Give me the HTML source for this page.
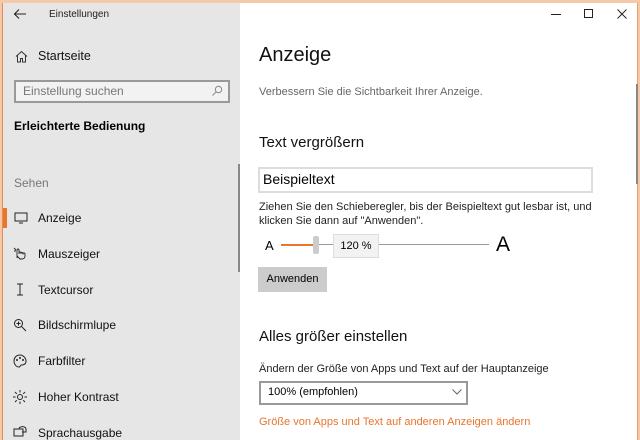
<!DOCTYPE html>
<html><head><meta charset="utf-8"><style>
*{margin:0;padding:0;box-sizing:border-box}
body{width:640px;height:440px;overflow:hidden;position:relative;background:#f5c9a8;font-family:"Liberation Sans",sans-serif;color:#000}
.a{position:absolute;white-space:nowrap}
#win{position:absolute;left:2px;top:3px;width:636px;height:437px;background:#fff;border-left:1px solid #e88a50;border-right:1px solid #e8a070}
#side{position:absolute;left:3px;top:3px;width:237px;height:437px;background:#e6e6e6}
.it{font-size:12px;color:#111}
svg{position:absolute}
</style></head><body>
<div id="win"></div>
<div id="side"></div>
<!-- title -->
<svg style="left:13px;top:8px" width="14" height="12" viewBox="0 0 14 12"><path d="M13 6H2M6 1.5L1.5 6 6 10.5" stroke="#222" fill="none" stroke-width="1.1"/></svg>
<div class="a" style="left:49px;top:9px;font-size:10px;color:#222">Einstellungen</div>
<svg style="left:15px;top:50px" width="13" height="13" viewBox="0 0 13 13"><path d="M1 6.5L6.5 1.5 12 6.5M2.5 5.5V12h3V8.5h2V12h3V5.5" stroke="#333" fill="none"/></svg>
<div class="a it" style="left:38px;top:49px;font-size:12.5px">Startseite</div>
<div class="a" style="left:14px;top:80px;width:216px;height:23px;border:2px solid #999;background:#f2f2f2"></div>
<div class="a" style="left:23px;top:84px;font-size:12px;color:#777">Einstellung suchen</div>
<svg style="left:211px;top:85px" width="12" height="12" viewBox="0 0 12 12"><circle cx="7.5" cy="4.5" r="3.2" stroke="#888" fill="none"/><path d="M5.2 6.8L1.5 10.5" stroke="#888"/></svg>
<div class="a" style="left:14px;top:119px;font-size:12px;font-weight:bold">Erleichterte Bedienung</div>
<div class="a" style="left:14px;top:176px;font-size:12px;color:#777">Sehen</div>
<div class="a" style="left:238px;top:164px;width:2px;height:108px;background:#888"></div>
<div class="a" style="left:3px;top:208px;width:4px;height:20px;background:#e8762c"></div>
<svg style="left:14px;top:212px" width="14" height="12" viewBox="0 0 14 12"><rect x="1" y="1" width="12" height="8" stroke="#222" fill="none"/><path d="M5 11h4" stroke="#222"/></svg>
<div class="a it" style="left:38px;top:211px">Anzeige</div>
<svg style="left:13px;top:246px" width="14" height="14" viewBox="0 0 14 14"><path d="M4 12V4a1 1 0 012 0v4M6 7a1 1 0 012 0v1M8 7.5a1 1 0 012 0v1M10 8a1 1 0 012 0v2c0 2-1.5 3-3 3H7L4 10M1 2l2 2M1 5h2" stroke="#222" fill="none" stroke-width="0.9"/></svg>
<div class="a it" style="left:38px;top:247px">Mauszeiger</div>
<svg style="left:16px;top:283px" width="8" height="13" viewBox="0 0 8 13"><path d="M1 1h6M4 1v11M1 12h6" stroke="#222" fill="none"/></svg>
<div class="a it" style="left:38px;top:283px">Textcursor</div>
<svg style="left:13px;top:318px" width="14" height="14" viewBox="0 0 14 14"><circle cx="5.5" cy="5.5" r="4" stroke="#222" fill="none"/><path d="M8.5 8.5L13 13M3.5 5.5h4M5.5 3.5v4" stroke="#222"/></svg>
<div class="a it" style="left:38px;top:318px">Bildschirmlupe</div>
<svg style="left:13px;top:354px" width="14" height="14" viewBox="0 0 14 14"><path d="M7 1C3 1 1 4 1 7s2 6 5 6c1.5 0 1-2 2.5-2C12 11 13 9 13 7c0-3-3-6-6-6z" stroke="#222" fill="none"/><circle cx="4" cy="6" r="1" fill="#222"/><circle cx="7" cy="4" r="1" fill="#222"/><circle cx="10" cy="6" r="1" fill="#222"/></svg>
<div class="a it" style="left:38px;top:354px">Farbfilter</div>
<svg style="left:13px;top:390px" width="14" height="14" viewBox="0 0 14 14"><circle cx="7" cy="7" r="2.5" stroke="#222" fill="none"/><path d="M7 0v2.5M7 11.5V14M0 7h2.5M11.5 7H14M2 2l1.8 1.8M10.2 10.2L12 12M2 12l1.8-1.8M10.2 3.8L12 2" stroke="#222"/></svg>
<div class="a it" style="left:38px;top:390px">Hoher Kontrast</div>
<svg style="left:13px;top:426px" width="14" height="14" viewBox="0 0 14 14"><rect x="1" y="3" width="9" height="7" stroke="#222" fill="none"/><path d="M6 3a3 2 0 017 0v3h-4" stroke="#222" fill="none"/></svg>
<div class="a it" style="left:38px;top:426px">Sprachausgabe</div>
<!-- window controls -->
<div class="a" style="left:551px;top:14px;width:10px;height:1px;background:#222"></div>
<div class="a" style="left:584px;top:9px;width:9px;height:9px;border:1px solid #222"></div>
<svg style="left:617px;top:9px" width="10" height="10" viewBox="0 0 10 10"><path d="M0.5 0.5l9 9M9.5 0.5l-9 9" stroke="#222"/></svg>
<div class="a" style="left:636px;top:84px;width:2px;height:100px;background:#888"></div>
<!-- content -->
<div class="a" style="left:259px;top:44px;font-size:20px;color:#111">Anzeige</div>
<div class="a" style="left:259px;top:86px;font-size:11px;color:#666">Verbessern Sie die Sichtbarkeit Ihrer Anzeige.</div>
<div class="a" style="left:259px;top:134px;font-size:15px;color:#111">Text vergrößern</div>
<div class="a" style="left:258px;top:167px;width:335px;height:26px;border:2px solid #ddd"></div>
<div class="a" style="left:263px;top:171px;font-size:14px">Beispieltext</div>
<div class="a" style="left:259px;top:200px;font-size:11px;color:#222;line-height:14px">Ziehen Sie den Schieberegler, bis der Beispieltext gut lesbar ist, und<br>klicken Sie dann auf "Anwenden".</div>
<div class="a" style="left:265px;top:238px;font-size:13px">A</div>
<div class="a" style="left:281px;top:244px;width:34px;height:2px;background:#e8762c"></div>
<div class="a" style="left:318px;top:244px;width:171px;height:1px;background:#999"></div>
<div class="a" style="left:313px;top:236px;width:6px;height:18px;background:#ccc;border-radius:2px"></div>
<div class="a" style="left:333px;top:234px;width:46px;height:24px;background:#f2f2f2;border:1px solid #ddd;font-size:11px;text-align:center;line-height:22px">120 %</div>
<div class="a" style="left:496px;top:233px;font-size:21px">A</div>
<div class="a" style="left:258px;top:267px;width:69px;height:25px;background:#ccc;font-size:11px;text-align:center;line-height:25px">Anwenden</div>
<div class="a" style="left:259px;top:328px;font-size:15px;color:#111">Alles größer einstellen</div>
<div class="a" style="left:259px;top:363px;font-size:11px;color:#222">Ändern der Größe von Apps und Text auf der Hauptanzeige</div>
<div class="a" style="left:259px;top:381px;width:209px;height:24px;border:2px solid #999"></div>
<div class="a" style="left:268px;top:386px;font-size:11px">100% (empfohlen)</div>
<svg style="left:452px;top:389px" width="10" height="6" viewBox="0 0 10 6"><path d="M0.5 0.5L5 5 9.5 0.5" stroke="#666" fill="none"/></svg>
<div class="a" style="left:259px;top:416px;font-size:11px;color:#e8762c">Größe von Apps und Text auf anderen Anzeigen ändern</div>
</body></html>
